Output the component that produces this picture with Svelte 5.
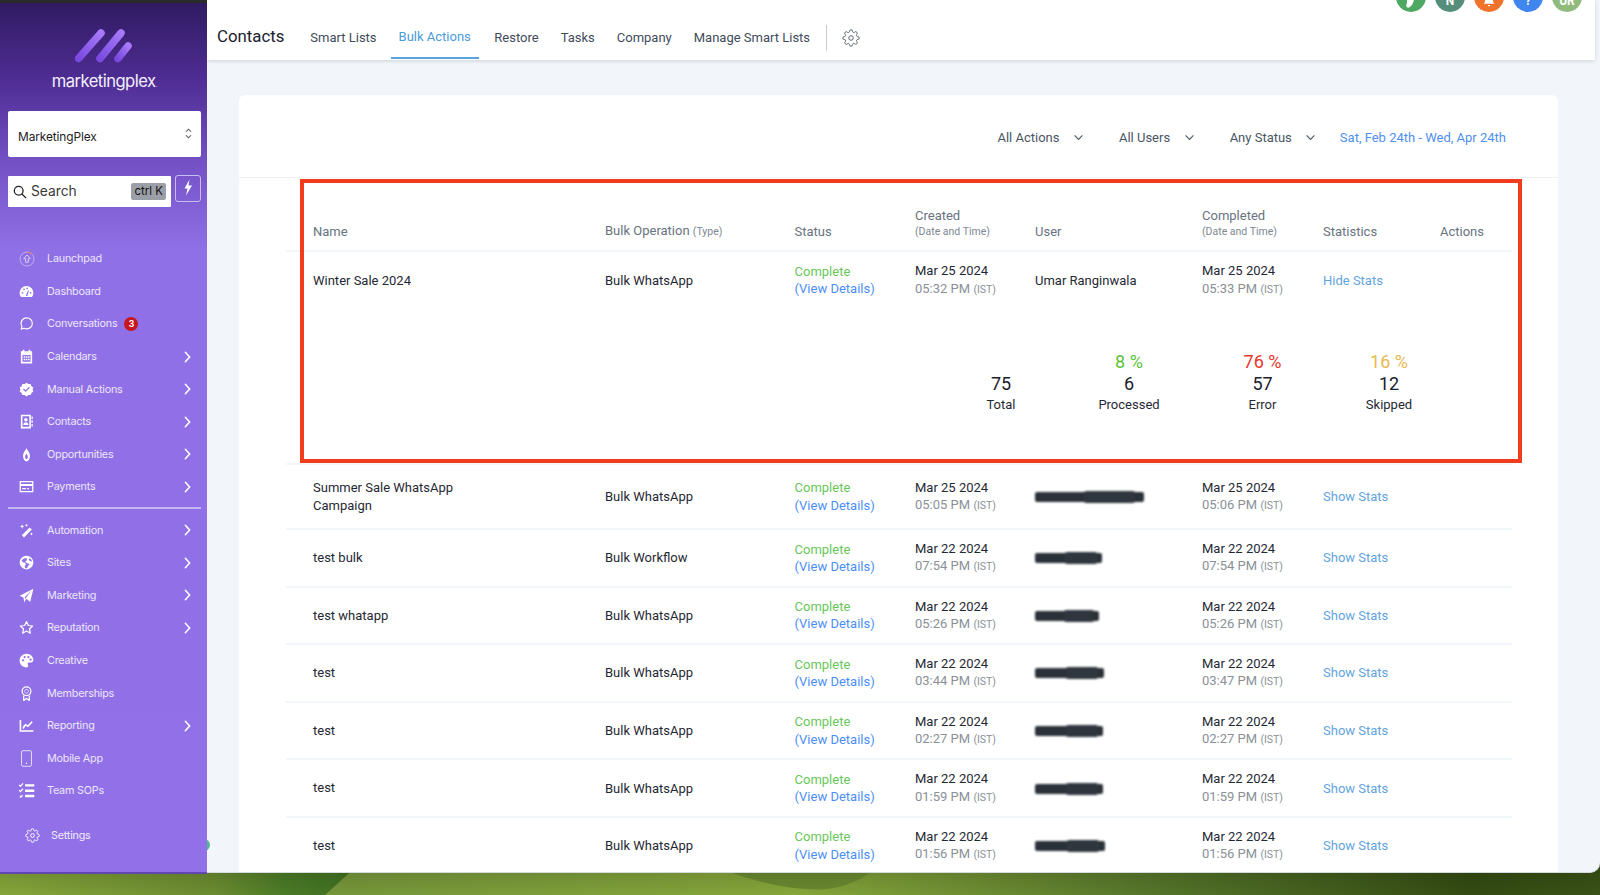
<script>
  const navA = [
    { id: 'launch', label: 'Launchpad', dim: true },
    { id: 'dash', label: 'Dashboard' },
    { id: 'chat', label: 'Conversations', badge: 3 },
    { id: 'cal', label: 'Calendars', more: true },
    { id: 'check', label: 'Manual Actions', more: true },
    { id: 'book', label: 'Contacts', more: true },
    { id: 'flame', label: 'Opportunities', more: true },
    { id: 'card', label: 'Payments', more: true }
  ];
  const navB = [
    { id: 'wand', label: 'Automation', more: true },
    { id: 'globe', label: 'Sites', more: true },
    { id: 'plane', label: 'Marketing', more: true },
    { id: 'star', label: 'Reputation', more: true },
    { id: 'palette', label: 'Creative' },
    { id: 'award', label: 'Memberships' },
    { id: 'chart', label: 'Reporting', more: true },
    { id: 'phone', label: 'Mobile App' },
    { id: 'list', label: 'Team SOPs' }
  ];
  const tabs = ['Smart Lists', 'Bulk Actions', 'Restore', 'Tasks', 'Company', 'Manage Smart Lists'];
  const avatars = [
    { c: '#4fa862', t: '', g: 'phone' }, { c: '#558f7c', t: 'N' }, { c: '#f0732b', t: '', g: 'bell' }, { c: '#3f86ee', t: '?' }, { c: '#8fbb7c', t: 'UR' }
  ];
  const rows = [
    { name: 'Summer Sale WhatsApp Campaign', type: 'Bulk WhatsApp', d: 'Mar 25 2024', t1: '05:05 PM', t2: '05:06 PM', r: 109, tall: true },
    { name: 'test bulk', type: 'Bulk Workflow', d: 'Mar 22 2024', t1: '07:54 PM', t2: '07:54 PM', r: 67 },
    { name: 'test whatapp', type: 'Bulk WhatsApp', d: 'Mar 22 2024', t1: '05:26 PM', t2: '05:26 PM', r: 64 },
    { name: 'test', type: 'Bulk WhatsApp', d: 'Mar 22 2024', t1: '03:44 PM', t2: '03:47 PM', r: 69 },
    { name: 'test', type: 'Bulk WhatsApp', d: 'Mar 22 2024', t1: '02:27 PM', t2: '02:27 PM', r: 68 },
    { name: 'test', type: 'Bulk WhatsApp', d: 'Mar 22 2024', t1: '01:59 PM', t2: '01:59 PM', r: 68 },
    { name: 'test', type: 'Bulk WhatsApp', d: 'Mar 22 2024', t1: '01:56 PM', t2: '01:56 PM', r: 70 }
  ];
  const stats = [
    { pct: '', n: 75, label: 'Total', cls: '' },
    { pct: '8 %', n: 6, label: 'Processed', cls: 'green' },
    { pct: '76 %', n: 57, label: 'Error', cls: 'red' },
    { pct: '16 %', n: 12, label: 'Skipped', cls: 'amber' }
  ];
  const filters = ['All Actions', 'All Users', 'Any Status'];
  const gear = 'M19.4 15a1.65 1.65 0 0 0 .33 1.82l.06.06a2 2 0 0 1 0 2.83 2 2 0 0 1-2.83 0l-.06-.06a1.65 1.65 0 0 0-1.82-.33 1.65 1.65 0 0 0-1 1.51V21a2 2 0 0 1-2 2 2 2 0 0 1-2-2v-.09A1.65 1.65 0 0 0 9 19.4a1.65 1.65 0 0 0-1.82.33l-.06.06a2 2 0 0 1-2.83 0 2 2 0 0 1 0-2.83l.06-.06a1.65 1.65 0 0 0 .33-1.82 1.65 1.65 0 0 0-1.51-1H3a2 2 0 0 1-2-2 2 2 0 0 1 2-2h.09A1.65 1.65 0 0 0 4.6 9a1.65 1.65 0 0 0-.33-1.82l-.06-.06a2 2 0 0 1 0-2.83 2 2 0 0 1 2.83 0l.06.06a1.65 1.65 0 0 0 1.82.33H9a1.65 1.65 0 0 0 1-1.51V3a2 2 0 0 1 2-2 2 2 0 0 1 2 2v.09a1.65 1.65 0 0 0 1 1.51 1.65 1.65 0 0 0 1.82-.33l.06-.06a2 2 0 0 1 2.83 0 2 2 0 0 1 0 2.83l-.06.06a1.65 1.65 0 0 0-.33 1.82V9a1.65 1.65 0 0 0 1.51 1H21a2 2 0 0 1 2 2 2 2 0 0 1-2 2h-.09a1.65 1.65 0 0 0-1.51 1z';
</script>

{#snippet icon(id)}
  <svg class="ico ico-{id}" viewBox="0 0 24 24" fill="#fff" stroke="none">
    {#if id === 'launch'}
      <circle cx="12" cy="12" r="10.5" fill="none" stroke="#c4b2f2" stroke-width="1.4" />
      <path d="M12 1.5a10.5 10.5 0 0 1 8 3.8" fill="none" stroke="#e8825a" stroke-width="1.6" />
      <path d="M12 6l5 5.5h-3V17h-4v-5.500H7z" fill="none" stroke="#d8ccf6" stroke-width="1.5" />
    {:else if id === 'dash'}
      <path d="M12 3A11 11 0 0 0 1 14c0 2.500.8 4.800 2.200 6.600h17.600A11 11 0 0 0 23 14 11 11 0 0 0 12 3z" />
      <circle cx="5.500" cy="14" r="1.400" fill="#9270e8" /><circle cx="8" cy="8.500" r="1.400" fill="#9270e8" /><circle cx="13" cy="6.800" r="1.400" fill="#9270e8" /><circle cx="18.500" cy="14" r="1.400" fill="#9270e8" />
      <path d="M11 19l3.500-9 1.200.5L13.500 19z" fill="#9270e8" />
    {:else if id === 'chat'}
      <path d="M12.500 3a8.800 8.800 0 0 1 0 17.600c-1.700 0-3.200-.4-4.500-1.100L3.500 21l1.200-4.500A8.800 8.800 0 0 1 12.500 3z" fill="none" stroke="#fff" stroke-width="1.800" stroke-linejoin="round" />
    {:else if id === 'cal'}
      <path fill-rule="evenodd" d="M6 1h2.500v2.500h7V1H18v2.500h3V23H3V3.500h3zM5.500 9.500v11h13v-11zM7.500 11.500h2.500V14H7.500zM11 11.500h2.500V14H11zM14.500 11.500H17V14h-2.500zM7.500 15.500h2.500V18H7.500zM11 15.500h2.500V18H11zM14.500 15.500H17V18h-2.500z" />
    {:else if id === 'check'}
      <path fill-rule="evenodd" d="M12 1l3 2.200 3.700-.1 1.200 3.500 3 2.200L21.700 12l1.200 3.200-3 2.200-1.200 3.500-3.700-.1L12 23l-3-2.200-3.700.1-1.200-3.500-3-2.200L2.300 12 1.100 8.800l3-2.200 1.200-3.500 3.700.1zM17.500 9L16 7.500l-5.500 5.600-2.600-2.600-1.500 1.500 4.100 4.100z" />
    {:else if id === 'book'}
      <path fill-rule="evenodd" d="M3 1h16v22H3zM5.500 3.500v17h11v-17zM11 6.500a2.800 2.800 0 1 1 0 5.600 2.800 2.800 0 0 1 0-5.600zM6.800 17.500c0-2.500 1.800-4.200 4.200-4.200s4.200 1.700 4.200 4.200zM20 4h2v4h-2zM20 10h2v4h-2zM20 16h2v4h-2z" />
    {:else if id === 'flame'}
      <path fill-rule="evenodd" d="M12 1c.8 4 5.500 7 5.500 13a5.500 9 0 0 1-5.500 9 5.500 9 0 0 1-5.500-9C6.500 8 11.200 5 12 1zM12 10c-.5 2-2.200 3.500-2.200 5.500S11 19.500 12 19.500s2.200-2 2.200-4S12.500 12 12 10z" />
    {:else if id === 'card'}
      <path fill-rule="evenodd" d="M1 3h22v18H1zM3 5v3h18V5zM3 11v8h18v-8zM5 14.500h6v2H5zM13 14.500h3v2h-3z" />
    {:else if id === 'wand'}
      <path d="M17 7l3.500 3.500L8 23l-3.500-3.500zM5 2l1 2.500L8.500 5.500 6 6.500 5 9 4 6.500 1.500 5.500 4 4.500zM12 1l.8 1.700 1.700.8-1.700.8-.8 1.700-.8-1.700-1.700-.8 1.700-.8zM20 15l.8 1.700 1.700.8-1.700.8-.8 1.700-.8-1.700-1.700-.8 1.700-.8z" />
    {:else if id === 'globe'}
      <path fill-rule="evenodd" d="M12 1a11 11 0 1 1 0 22 11 11 0 0 1 0-22zM4 9l3 3 3 .5 1 3-2 2 1 3.500c1 .3 2 .3 3 .1l1-3.100 3-3-3-2-3-1-1-2 2-1 1-3c-.8-.5-2-.7-3-.7-3 .5-5 2.200-6 4.700zM17 5l-1.500 2 2 2.500 3.500 1c-.2-2.200-2-4.500-4-5.500z" />
    {:else if id === 'plane'}
      <path d="M23 1L18 22l-6.500-5L8.500 23 7 15 1 12.500zM20 4L9.500 14.500 10 18l1.500-3z" />
    {:else if id === 'star'}
      <path d="M12 2.500l2.900 6.300 6.900.8-5.100 4.700 1.400 6.800-6.100-3.400-6.100 3.400 1.400-6.800L2.200 9.600l6.900-.8z" fill="none" stroke="#fff" stroke-width="2" stroke-linejoin="round" />
    {:else if id === 'palette'}
      <path fill-rule="evenodd" d="M12 1C5.800 1 1 5.800 1 12s4.800 11 11 11c2 0 2.800-1.300 2.800-2.600 0-1.500-1-2-1-3.200 0-1.100.9-1.900 2-1.900H19c2.300 0 4-1.800 4-4.100C23 5.500 18 1 12 1zM6.500 13.500a1.800 1.800 0 1 0 0-3.600 1.800 1.800 0 0 0 0 3.600zM9 8.300a1.800 1.800 0 1 0 0-3.600 1.800 1.800 0 0 0 0 3.600zM15 8.300a1.800 1.800 0 1 0 0-3.600 1.800 1.800 0 0 0 0 3.600zM18.500 12.500a1.800 1.800 0 1 0 0-3.600 1.800 1.800 0 0 0 0 3.600z" />
    {:else if id === 'award'}
      <circle cx="12" cy="8.500" r="7" fill="none" stroke="#fff" stroke-width="2" />
      <circle cx="12" cy="8.500" r="3" fill="none" stroke="#fff" stroke-width="1" />
      <path d="M7.500 15v8l4.500-3 4.500 3v-8" fill="none" stroke="#fff" stroke-width="2" stroke-linejoin="round" />
    {:else if id === 'chart'}
      <path d="M1 3h2.500v16.500H23V22H1zM6 14l4-5 4 2.500L20 5l2 1.800-7.500 8-4-2.500L8 17H6z" />
    {:else if id === 'phone'}
      <rect x="5" y="1" width="14" height="22" rx="2" fill="none" stroke="#e5dcfb" stroke-width="1.400" />
      <circle cx="12" cy="18.800" r="1" fill="#fff" />
    {:else if id === 'list'}
      <path d="M10 3h13v3.500H10zM10 10.500h13V14H10zM10 18h13v3.500H10z" />
      <path d="M1.500 4l2 2L7 2M1.500 11.500l2 2 3.500-4M3 19.500l1 2 2.500-3" fill="none" stroke="#fff" stroke-width="1.700" />
    {/if}
  </svg>
{/snippet}

{#snippet navItem(item)}
  <div class="nav-item" class:dim={item.dim}>
    <span class="nav-ico">{@render icon(item.id)}</span>
    <span class="nav-label">{item.label}</span>
    {#if item.badge}<span class="badge">{item.badge}</span>{/if}
    {#if item.more}
      <svg class="chev" viewBox="0 0 8 14"><path d="M1.500 1.500L6.500 7l-5 5.500" /></svg>
    {/if}
  </div>
{/snippet}

{#snippet when(d, t)}
  <div class="stack">
    <span class="date">{d}</span>
    <span class="time">{t} <small>(IST)</small></span>
  </div>
{/snippet}

{#snippet status()}
  <div class="stack">
    <span class="ok">Complete</span>
    <span class="view">(View Details)</span>
  </div>
{/snippet}

<div class="screen">
  <svg class="wallpaper" viewBox="0 0 1600 30" preserveAspectRatio="none" aria-hidden="true">
    <defs>
      <linearGradient id="wp" x1="0" y1="0" x2="1" y2="0">
        <stop offset="0" stop-color="#7d9c36" />
        <stop offset="0.22" stop-color="#76973a" />
        <stop offset="0.5" stop-color="#86a63a" />
        <stop offset="0.72" stop-color="#55752a" />
        <stop offset="0.92" stop-color="#344b12" />
        <stop offset="1" stop-color="#3a5216" />
      </linearGradient>
      <linearGradient id="wl" x1="0" y1="0" x2="1" y2="0">
        <stop offset="0" stop-color="#86a63a" />
        <stop offset="0.6" stop-color="#6b8b30" />
        <stop offset="0.8" stop-color="#4a7a26" />
        <stop offset="1" stop-color="#3e7020" />
      </linearGradient>
      <linearGradient id="shade" x1="0" y1="0" x2="0" y2="1">
        <stop offset="0" stop-color="#000" stop-opacity="0.16" />
        <stop offset="1" stop-color="#000" stop-opacity="0" />
      </linearGradient>
    </defs>
    <rect width="1600" height="30" fill="url(#wp)" />
    <path d="M0 0H358L325 30H0z" fill="url(#wl)" />
    <path d="M710 0H880C855 22 830 26 805 24 775 22 750 15 710 0z" fill="#6a8a30" />
    <rect width="1600" height="30" fill="url(#shade)" />
  </svg>

  <aside class="sidebar">
    <div class="brand">
      <svg class="logo" viewBox="0 0 60 34" aria-hidden="true">
        <defs>
          <linearGradient id="lg" x1="0" y1="1" x2="1" y2="0">
            <stop offset="0" stop-color="#7a4ae0" />
            <stop offset="1" stop-color="#a779f8" />
          </linearGradient>
        </defs>
        <path d="M3.500 29.500L26 4" stroke="url(#lg)" />
        <path d="M25 29.500L46 4" stroke="url(#lg)" />
        <path d="M43 29.500L53 17" stroke="url(#lg)" />
      </svg>
      <div class="wordmark">marketingplex<small>.</small></div>
    </div>

    <div class="switcher">
      <span>MarketingPlex</span>
      <svg viewBox="0 0 8 14"><path d="M1 5l3-3 3 3M1 9l3 3 3-3" /></svg>
    </div>

    <div class="search-row">
      <div class="search">
        <svg viewBox="0 0 16 16"><circle cx="6.500" cy="6.500" r="5" /><path d="M10.200 10.200L15 15" /></svg>
        <span class="search-text">Search</span>
        <span class="kbd">ctrl K</span>
      </div>
      <div class="bolt">
        <svg viewBox="0 0 10 16"><path d="M6.500 0L1.500 9h3L3 16l6-10H5.500z" /></svg>
      </div>
    </div>

    <nav class="nav">
      {#each navA as item}{@render navItem(item)}{/each}
      <hr />
      {#each navB as item}{@render navItem(item)}{/each}
    </nav>

    <div class="settings">
      <svg viewBox="0 0 24 24"><circle cx="12" cy="12" r="3" /><path d={gear} /></svg>
      <span>Settings</span>
    </div>
  </aside>

  <main class="main">
    <span class="dot"></span>
    <header class="topbar">
      <h1>Contacts</h1>
      <div class="tabs">
        {#each tabs as tab}
          <span class="tab" class:active={tab === 'Bulk Actions'}>{tab}</span>
        {/each}
      </div>
      <span class="vr"></span>
      <svg class="cog" viewBox="0 0 24 24"><circle cx="12" cy="12" r="3" /><path d={gear} /></svg>
      <div class="avatars">
        {#each avatars as a}
          <span class="avatar" style="background:{a.c}">
            {#if a.g === 'phone'}
              <svg viewBox="0 0 12 12"><path d="M2 0h7c0 3-1 6-3 8-1 1-2 2-3.500 1.500C1.500 9 .5 7 2 5.500z" /></svg>
            {:else if a.g === 'bell'}
              <svg viewBox="0 0 12 12"><path d="M2.500 0h7l.8 4.500 1.200 1.300H.5l1.200-1.300zM4.800 7h2.400a1.200 1.200 0 0 1-2.400 0z" /></svg>
            {:else}
              {a.t}
            {/if}
          </span>
        {/each}
      </div>
    </header>

    <section class="card">
      <div class="card-head">
        {#each filters as f}
          <span class="filter">{f}
            <svg viewBox="0 0 12 8"><path d="M1.500 1.500L6 6.200l4.500-4.700" /></svg>
          </span>
        {/each}
        <span class="range">Sat, Feb 24th - Wed, Apr 24th</span>
      </div>

      <div class="table">
        <div class="row head">
          <div>Name</div>
          <div>Bulk Operation <small>(Type)</small></div>
          <div>Status</div>
          <div class="stack"><span>Created</span><small>(Date and Time)</small></div>
          <div>User</div>
          <div class="stack"><span>Completed</span><small>(Date and Time)</small></div>
          <div>Statistics</div>
          <div>Actions</div>
        </div>

        <div class="expanded">
          <div class="row body">
            <div>Winter Sale 2024</div>
            <div>Bulk WhatsApp</div>
            {@render status()}
            {@render when('Mar 25 2024', '05:32 PM')}
            <div>Umar Ranginwala</div>
            {@render when('Mar 25 2024', '05:33 PM')}
            <div class="link">Hide Stats</div>
            <div></div>
          </div>
          <div class="stats">
            {#each stats as s}
              <div class="stat">
                <div class="pct {s.cls}">{s.pct}</div>
                <div class="num">{s.n}</div>
                <div class="lbl">{s.label}</div>
              </div>
            {/each}
          </div>
        </div>

        {#each rows as r}
          <div class="row body sep" class:tall={r.tall}>
            <div class="name">{r.name}</div>
            <div>{r.type}</div>
            {@render status()}
            {@render when(r.d, r.t1)}
            <div><span class="redact" style="width:{r.r}px"></span></div>
            {@render when(r.d, r.t2)}
            <div class="link">Show Stats</div>
            <div></div>
          </div>
        {/each}

        <div class="highlight"></div>
      </div>
    </section>
  </main>
</div>

<style>
  :global(body) { margin: 0; background: #3a5216; }

  .screen {
    position: relative;
    width: 1600px;
    height: 895px;
    overflow: hidden;
    display: flex;
    align-items: flex-start;
    font-family: Roboto, "Liberation Sans", sans-serif;
    color: #1f2933;
  }
  .wallpaper { position: absolute; left: 0; bottom: 0; width: 1600px; height: 30px; }

  /* sidebar */
  .sidebar {
    position: relative;
    z-index: 2;
    box-sizing: border-box;
    width: 207px;
    height: 874px;
    flex: none;
    padding: 3px 0 0;
    border-bottom: 2px solid #6446b3;
    background:
      linear-gradient(#2b2b2b, #2b2b2b) top / 100% 3px no-repeat,
      linear-gradient(#2f1a60 0, #4f2d94 80px, #7350c4 160px, #9070e6 250px, #9270e8 100%);
    font-family: Inter, "Noto Sans", sans-serif;
    color: #fff;
  }
  .brand { height: 108px; display: flex; flex-direction: column; align-items: center; }
  .logo { width: 60px; height: 34px; margin: 26px 0 0 2px; fill: none; stroke-width: 7.500; stroke-linecap: round; }
  .wordmark { margin: 7px 0 0 2px; font-size: 16.600px; letter-spacing: -0.550px; line-height: 22px; color: #f3effc; }
  .wordmark small { font-size: 8px; opacity: 0.6; }

  .switcher {
    box-sizing: border-box;
    height: 46px;
    margin: 0 6px 0 8px;
    padding: 4px 10px 0;
    display: flex;
    align-items: center;
    justify-content: space-between;
    background: #fff;
    border-radius: 2px;
    font-size: 11.900px;
    letter-spacing: -0.100px;
    color: #1d1d24;
  }
  .switcher svg { width: 7px; height: 13px; fill: none; stroke: #555; stroke-width: 1.200; margin: -5px -1px 0 0; }

  .search-row { display: flex; gap: 4px; margin: 19px 6px 0 8px; }
  .search {
    box-sizing: border-box;
    flex: 1;
    height: 31px;
    display: flex;
    align-items: center;
    padding: 0 5px;
    background: #fff;
    border-radius: 1px;
    color: #333;
  }
  .search svg { width: 14px; height: 14px; fill: none; stroke: #222; stroke-width: 1.500; margin-right: 4px; }
  .search-text { flex: 1; font-size: 13.800px; color: #3a3a3a; margin-top: -1px; }
  .kbd { padding: 1px 3px; font-size: 11.500px; line-height: 15px; background: #9ba0a8; border-radius: 2px; color: #111; }
  .bolt {
    box-sizing: border-box;
    width: 26px;
    height: 27px;
    margin-top: -1px;
    display: flex;
    align-items: center;
    justify-content: center;
    border: 1px solid #c9bcf2;
    border-radius: 3px;
  }
  .bolt svg { width: 10px; height: 17px; fill: #fff; margin-top: -2px; }

  .nav { margin-top: 35.500px; }
  .nav hr { height: 2px; margin: 3.500px 6px 5px 8px; border: 0; background: #c4b4ef; }
  .nav-item { height: 32.600px; display: flex; align-items: center; font-size: 10.800px; letter-spacing: -0.220px; color: #ece6fb; }
  .nav-ico { width: 47px; flex: none; display: flex; justify-content: center; box-sizing: border-box; padding-left: 6px; }
  .ico { width: 15px; height: 15px; }
  .dim .ico { width: 16px; height: 16px; }
  .ico-list, .ico-phone { width: 17px; height: 17px; }
  .nav-label { white-space: nowrap; }
  .badge {
    width: 14px;
    height: 14px;
    margin-left: 7px;
    border-radius: 50%;
    background: #c8161d;
    color: #fff;
    font-size: 8.500px;
    font-weight: 700;
    line-height: 14px;
    text-align: center;
  }
  .chev { width: 7px; height: 12px; position: absolute; left: 184px; fill: none; stroke: #fff; stroke-width: 1.800; stroke-linecap: round; }

  .settings { display: flex; align-items: center; margin: 12px 0 0 25px; height: 32px; gap: 11px; font-size: 10.800px; letter-spacing: -0.220px; color: #f1ecfd; }
  .settings svg { width: 15px; height: 15px; fill: none; stroke: #fff; stroke-width: 1.600; }

  /* main */
  .main {
    position: relative;
    z-index: 1;
    width: 1393px;
    height: 873px;
    flex: none;
    background: #f2f6fa;
    border-bottom: 1px solid #d5dadd;
    border-bottom-right-radius: 10px;
    box-sizing: border-box;
    overflow: visible;
  }
  .dot { position: absolute; left: -9px; top: 839px; width: 12px; height: 12px; border-radius: 50%; background: #4dbb8c; }

  .topbar {
    box-sizing: border-box;
    width: 1388px;
    height: 60px;
    display: flex;
    align-items: center;
    padding-left: 10px;
    background: #fff;
    box-shadow: 0 1px 4px rgba(60, 70, 80, 0.2);
    overflow: hidden;
    position: relative;
  }
  h1 { margin: 12px 15px 0 0; font-size: 16.800px; font-weight: 400; color: #1a202c; }
  .tabs { display: flex; align-self: stretch; }
  .tab {
    box-sizing: border-box;
    height: 60px;
    padding: 30px 11px 0;
    font-size: 13px;
    line-height: 16px;
    color: #3f4b5b;
    white-space: nowrap;
  }
  .tab.active { padding: 29px 8px 0; margin: 0 4.500px 0 3px; color: #4b9bdc; border-bottom: 2px solid #5aa3df; height: 59px; }
  .vr { width: 1px; height: 26px; margin: 16px 0 0 5px; background: #c7cbd0; }
  .cog { width: 18px; height: 18px; margin: 16px 0 0 15px; fill: none; stroke: #5b6470; stroke-width: 1.300; }
  .avatars { position: absolute; left: 1189px; top: -18px; display: flex; gap: 9px; }
  .avatar {
    box-sizing: border-box;
    width: 30px;
    height: 30px;
    padding-top: 7px;
    border-radius: 50%;
    display: flex;
    align-items: center;
    justify-content: center;
    color: #fff;
    font-size: 12px;
    font-weight: 700;
    line-height: 14px;
    overflow: hidden;
  }
  .avatar svg { width: 12px; height: 12px; fill: #fff; margin-top: 6px; }

  .card {
    box-sizing: border-box;
    width: 1319px;
    height: 777px;
    margin: 35px 0 0 32px;
    background: #fff;
    border-radius: 6px 6px 0 0;
    overflow: hidden;
  }
  .card-head {
    box-sizing: border-box;
    height: 83px;
    padding: 2px 52px 0 0;
    display: flex;
    align-items: center;
    justify-content: flex-end;
    border-bottom: 1px solid #f0f3f6;
    font-size: 13px;
    color: #4a5563;
  }
  .filter { display: flex; align-items: center; gap: 13.500px; margin-right: 35px; white-space: nowrap; }
  .filter svg { width: 11px; height: 7px; fill: none; stroke: #4a5563; stroke-width: 1.200; }
  .range { color: #4f8ff0; margin-left: -11.500px; white-space: nowrap; }

  .table { position: relative; margin: 0 46px 0 47px; font-size: 13px; }
  .highlight {
    position: absolute;
    left: 14px;
    top: 1px;
    width: 1222px;
    height: 284px;
    box-sizing: border-box;
    border: 4px solid #f23c1e;
    pointer-events: none;
  }

  .row {
    display: grid;
    grid-template-columns: 292px 189.500px 120.500px 120px 167px 121px 117px 1fr;
    padding-left: 27px;
    align-items: center;
    box-sizing: border-box;
  }
  .head { height: 74px; align-items: end; padding-bottom: 10px; border-bottom: 2px solid #f2f6fa; color: #687380; line-height: 16px; }
  .head small { font-size: 10.500px; color: #7d8791; }
  .body { height: 56px; color: #1f2933; }
  .sep { height: 57.600px; border-bottom: 2px solid #f2f6fa; }
  .sep.tall { height: 65px; }
  .expanded { height: 213px; border-bottom: 2px solid #f2f6fa; box-sizing: border-box; }
  .name { max-width: 170px; line-height: 17.500px; }
  .stack { display: flex; flex-direction: column; line-height: 17.300px; }
  .head .stack { line-height: 16px; }
  .ok { color: #68c75a; }
  .view { color: #4c8ef7; }
  .time { color: #8a9097; }
  .time small { font-size: 10.500px; }
  .link { color: #62a4e0; }
  .redact {
    position: relative;
    display: block;
    height: 10px;
    margin-top: 1px;
    background: #2a3138;
    border-radius: 2px;
    filter: blur(0.800px);
  }
  .redact::after {
    content: '';
    position: absolute;
    left: 45%;
    right: 8%;
    top: -1px;
    bottom: -1px;
    background: #2f363d;
    border-radius: 2px;
  }

  .stats { display: grid; grid-template-columns: 128px 128px 139px 114px; padding: 43px 0 0 651px; text-align: center; }
  .pct, .num { height: 22px; line-height: 22px; font-size: 18px; }
  .num { color: #1a202c; }
  .lbl { line-height: 20px; font-size: 13px; font-weight: 400; color: #1f2933; }
  .green { color: #5cc337; }
  .red { color: #e6372c; }
  .amber { color: #e9b84f; }
</style>
